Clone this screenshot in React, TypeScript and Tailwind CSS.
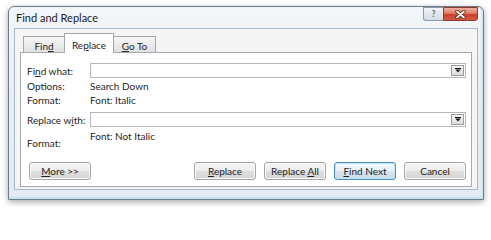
import React from "react";

function U({ children }: { children: React.ReactNode }) {
  return <span className="underline underline-offset-[1px]">{children}</span>;
}

function Arrow() {
  return (
    <svg width="6" height="5" viewBox="0 0 6 5">
      <rect x="0" y="0" width="6" height="1" fill="#111" />
      <path d="M0.3 1.6 H5.7 L3 4.4 Z" fill="#111" />
    </svg>
  );
}

function Combo() {
  return (
    <div className="flex-1 h-[15px] border border-[#b3b7be] bg-white flex justify-end p-[1px]">
      <div className="w-[13px] h-full border border-[#9a9ea4] bg-[linear-gradient(180deg,#f7f7f7,#dcdcdc)] flex items-center justify-center">
        <Arrow />
      </div>
    </div>
  );
}

function Btn({
  children,
  def,
}: {
  children: React.ReactNode;
  def?: boolean;
}) {
  return (
    <div
      className={
        def
          ? "w-[62px] h-[18px] rounded-[3px] border border-[#4a8ec4] shadow-[inset_0_0_0_1px_#bfe6fb] bg-[linear-gradient(180deg,#f5f9fc_0%,#e9f1f7_50%,#d7e4ee_51%,#cddbe6_100%)] flex items-center justify-center text-[10px] leading-[12px] text-[#222]"
          : "w-[62px] h-[18px] rounded-[3px] border border-[#a2a4a7] shadow-[inset_0_0_0_1px_#fbfbfb] bg-[linear-gradient(180deg,#f6f6f6_0%,#ececec_50%,#dedede_51%,#d6d6d6_100%)] flex items-center justify-center text-[10px] leading-[12px] text-[#222]"
      }
    >
      <span className="whitespace-pre">{children}</span>
    </div>
  );
}

export default function App() {
  return (
    <div className="w-[491px] h-[207px] bg-white pt-[6px] pl-[8px] font-['Lato',sans-serif] text-[#262626]">
      <div className="w-[476px] h-[194px] rounded-t-[6px] border border-[#6f7b88] bg-[linear-gradient(180deg,#f4f7fa_0%,#eaf0f6_30%,#e2eaf3_100%)] shadow-[inset_0_-2px_0_#bfe3f2,inset_-2px_0_0_#cfe9f4,0_2px_6px_rgba(0,0,0,0.35)] flex flex-col">
        {/* title bar */}
        <div className="h-[21px] flex items-start justify-between">
          <div className="pl-[7px] pt-[4px] text-[11px] leading-[13px] text-[#1b1b1b]">
            Find and Replace
          </div>
          <div className="flex mr-[5px]">
            <div className="w-[20px] h-[14px] rounded-bl-[3px] border border-[#8f9aa6] border-r-0 bg-[linear-gradient(180deg,#f3f6f9_0%,#e1e7ee_50%,#d2dbe5_100%)] flex items-center justify-center text-[9px] leading-[10px] font-bold text-[#5f6b77]">
              ?
            </div>
            <div className="w-[35px] h-[14px] rounded-br-[3px] border border-[#8d3a2c] bg-[linear-gradient(180deg,#eeb2a4_0%,#e07a64_45%,#c9432b_55%,#d35a41_100%)] flex items-center justify-center">
              <svg width="11" height="9" viewBox="0 0 11 9">
                <path
                  d="M2 1.5 L9 7.5 M9 1.5 L2 7.5"
                  stroke="#5a1e14"
                  strokeWidth="3.4"
                  strokeLinecap="round"
                />
                <path
                  d="M2 1.5 L9 7.5 M9 1.5 L2 7.5"
                  stroke="#ffffff"
                  strokeWidth="1.8"
                  strokeLinecap="round"
                />
              </svg>
            </div>
          </div>
        </div>

        {/* client */}
        <div className="mx-[5px] mb-[9px] flex-1 border border-[#a9b8c8] bg-[#f5f5f5] px-[5px] pb-[2px] flex flex-col">
          {/* tabs */}
          <div className="h-[23px] flex items-end pl-[3px]">
            <div className="w-[41px] h-[16px] border border-[#a3a7ad] border-b-0 border-r-0 bg-[linear-gradient(180deg,#f6f6f6_0%,#ececec_50%,#e0e0e0_100%)] flex items-center justify-center pt-[2px] text-[10px] leading-[12px]">
              <span>
                Fin<U>d</U>
              </span>
            </div>
            <div className="relative z-10 -mb-[1px] w-[50px] h-[20px] border border-[#a3a7ad] border-b-0 bg-white flex items-center justify-center pt-[3px] text-[10px] leading-[12px]">
              <span>
                Re<U>p</U>lace
              </span>
            </div>
            <div className="w-[42px] h-[16px] border border-[#a3a7ad] border-b-0 border-l-0 bg-[linear-gradient(180deg,#f6f6f6_0%,#ececec_50%,#e0e0e0_100%)] flex items-center justify-center pt-[2px] text-[10px] leading-[12px]">
              <span>
                <U>G</U>o To
              </span>
            </div>
          </div>

          {/* panel */}
          <div className="flex-1 border border-[#a6a9ae] bg-white pl-[6px] pr-[5px] pt-[10px] flex flex-col text-[10px] leading-[14px]">
            <div className="flex items-center h-[15px]">
              <div className="w-[63px]">
                Fi<U>n</U>d what:
              </div>
              <Combo />
            </div>
            <div className="flex mt-[1px] h-[14px]">
              <div className="w-[63px]">Options:</div>
              <div>Search Down</div>
            </div>
            <div className="flex h-[14px]">
              <div className="w-[63px]">Format:</div>
              <div>Font: Italic</div>
            </div>
            <div className="flex items-center h-[15px] mt-[5px]">
              <div className="w-[63px]">
                Replace w<U>i</U>th:
              </div>
              <Combo />
            </div>
            <div className="flex mt-[2px]">
              <div className="w-[63px] pt-[7px]">Format:</div>
              <div>Font: Not Italic</div>
            </div>
            <div className="flex items-center mt-[12px]">
              <div className="ml-[2px]">
                <Btn>
                  <U>M</U>ore &gt;&gt;
                </Btn>
              </div>
              <div className="flex-1" />
              <div className="flex gap-[8px]">
                <Btn>
                  <U>R</U>eplace
                </Btn>
                <Btn>
                  {"Replace "}
                  <U>A</U>ll
                </Btn>
                <Btn def>
                  <U>F</U>ind Next
                </Btn>
                <Btn>Cancel</Btn>
              </div>
            </div>
          </div>
        </div>
      </div>
    </div>
  );
}
